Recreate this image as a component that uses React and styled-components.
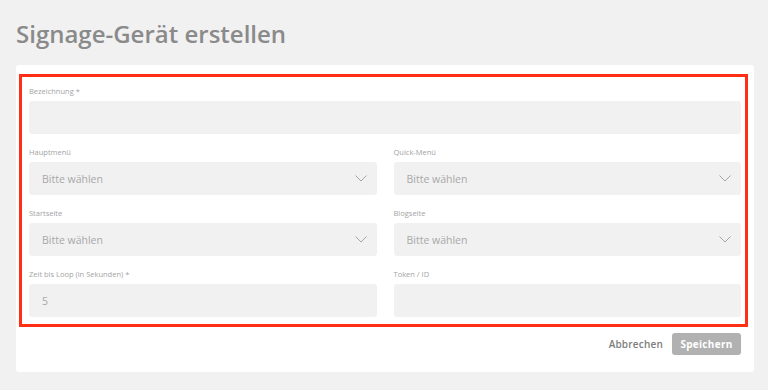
import React from 'react';
import styled, { createGlobalStyle } from 'styled-components';

const GlobalStyle = createGlobalStyle`
  body {
    margin: 0;
    background: #f1f1f1;
    font-family: "Open Sans", "Liberation Sans", sans-serif;
  }
`;

const Page = styled.div`
  padding: 19px 14px 0 16px;
`;

const Title = styled.h1`
  margin: 0 0 16px;
  font-size: 24px;
  line-height: 30px;
  font-weight: 600;
  color: #8a8a8a;
`;

const Card = styled.div`
  background: #fff;
  border-radius: 3px;
  padding: 9px 6px 17px 3px;
`;

const Form = styled.div`
  border: 3px solid #ff2e14;
  padding: 8px 4px 7px 7px;
  display: grid;
  grid-template-columns: 1fr 1fr;
  column-gap: 17px;
  row-gap: 12px;
`;

const Field = styled.div`
  display: flex;
  flex-direction: column;
  grid-column: ${p => (p.$full ? '1 / -1' : 'auto')};
`;

const Label = styled.label`
  font-size: 7.5px;
  line-height: 12px;
  height: 12px;
  margin-bottom: 4px;
  color: #a3a3a3;
`;

const Box = styled.div`
  height: 33px;
  background: #f1f1f1;
  border-radius: 3px;
  display: flex;
  align-items: center;
  justify-content: space-between;
  padding: 0 10px 0 13px;
  font-size: 10.5px;
  color: #a8a8a8;
`;

const Footer = styled.div`
  display: flex;
  justify-content: flex-end;
  align-items: center;
  gap: 9px;
  padding: 6px 7px 0 0;
`;

const TextButton = styled.button`
  border: none;
  background: none;
  padding: 0;
  font-family: inherit;
  font-size: 10px;
  font-weight: 600;
  letter-spacing: 0.2px;
  color: #7d7d7d;
`;

const SaveButton = styled.button`
  border: none;
  border-radius: 3px;
  height: 22px;
  width: 69px;
  background: #b1b1b1;
  color: #fff;
  font-family: inherit;
  font-size: 10px;
  font-weight: 700;
  letter-spacing: 0.3px;
`;

const Chevron = () => (
  <svg width="12" height="7" viewBox="0 0 12 7" fill="none">
    <path d="M0.5 0.5 L6 6 L11.5 0.5" stroke="#9c9c9c" strokeWidth="0.9" />
  </svg>
);

const Select = ({ label }) => (
  <Field>
    <Label>{label}</Label>
    <Box>
      <span>Bitte wählen</span>
      <Chevron />
    </Box>
  </Field>
);

const Input = ({ label, value, full }) => (
  <Field $full={full}>
    <Label>{label}</Label>
    <Box>{value}</Box>
  </Field>
);

export default function App() {
  return (
    <Page>
      <GlobalStyle />
      <Title>Signage-Gerät erstellen</Title>
      <Card>
        <Form>
          <Input label="Bezeichnung *" full />
          <Select label="Hauptmenü" />
          <Select label="Quick-Menü" />
          <Select label="Startseite" />
          <Select label="Blogseite" />
          <Input label="Zeit bis Loop (in Sekunden) *" value="5" />
          <Input label="Token / ID" />
        </Form>
        <Footer>
          <TextButton>Abbrechen</TextButton>
          <SaveButton>Speichern</SaveButton>
        </Footer>
      </Card>
    </Page>
  );
}
